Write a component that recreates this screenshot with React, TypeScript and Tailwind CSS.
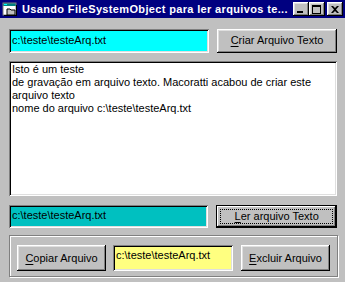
import React from "react";

const sunken =
  "shadow-[inset_1px_1px_#808080,inset_-1px_-1px_#ffffff,inset_2px_2px_#000000,inset_-2px_-2px_#dfdfdf]";
const raised =
  "shadow-[inset_-1px_-1px_#000000,inset_1px_1px_#ffffff,inset_-2px_-2px_#808080,inset_2px_2px_#dfdfdf]";

function Btn({ className = "", children }: { className?: string; children: React.ReactNode }) {
  return (
    <div
      className={`bg-[#c0c0c0] ${raised} flex items-center justify-center text-[11px] text-black leading-none ${className}`}
    >
      {children}
    </div>
  );
}

function CtrlBtn({ children }: { children: React.ReactNode }) {
  return (
    <div className={`w-[16px] h-[14px] bg-[#c0c0c0] ${raised} flex items-center justify-center`}>
      {children}
    </div>
  );
}

export default function App() {
  return (
    <div
      className="w-[345px] h-[282px] bg-[#c0c0c0] overflow-hidden flex flex-col"
      style={{ fontFamily: '"Liberation Sans", Arial, sans-serif' }}
    >
      {/* Title bar */}
      <div className="h-[18px] bg-[#000080] flex items-center pl-[2px] pr-[2px] shrink-0">
        <svg width="16" height="16" viewBox="0 0 16 16" className="shrink-0">
          <rect x="1" y="2" width="13" height="12" fill="#ffffff" />
          <rect x="1" y="2" width="13" height="3" fill="#008080" />
          <rect x="2" y="3" width="3" height="1" fill="#00ffff" />
          <rect x="1" y="2" width="13" height="12" fill="none" stroke="#808080" strokeWidth="1" />
          <path d="M5 8 h3 l1 1 h4 v5 h-8 z" fill="#c0c0c0" stroke="#000000" strokeWidth="1" />
          <rect x="14" y="4" width="1" height="10" fill="#000000" />
          <rect x="2" y="14" width="13" height="1" fill="#000000" />
        </svg>
        <div className="ml-[4px] text-white font-bold text-[11px] leading-none whitespace-nowrap tracking-[0.35px]">
          Usando FileSystemObject para ler arquivos te...
        </div>
        <div className="flex-1" />
        <div className="flex items-center">
          <CtrlBtn>
            <div className="w-[6px] h-[2px] bg-black mt-[6px] mr-[2px]" />
          </CtrlBtn>
          <CtrlBtn>
            <div className="w-[9px] h-[9px] border border-black border-t-2 mr-[1px]" />
          </CtrlBtn>
          <div className="w-[2px]" />
          <CtrlBtn>
            <svg width="8" height="7" viewBox="0 0 8 7" className="mr-[1px]">
              <path d="M0 0h2l2 2 2-2h2l-3 3.5 3 3.5h-2l-2-2-2 2h-2l3-3.5z" fill="#000" />
            </svg>
          </CtrlBtn>
        </div>
      </div>

      {/* Content */}
      <div className="flex flex-col pl-[9px] pr-[8px] pt-[11px]">
        <div className="flex h-[24px] gap-[8px]">
          <div className={`w-[200px] h-full bg-[#00ffff] ${sunken} flex items-center pl-[3px] text-[11px] text-black leading-none pb-[2px]`}>
            c:\teste\testeArq.txt
          </div>
          <Btn className="w-[120px] h-full pb-[1px]">
            <span>
              <span className="underline underline-offset-[2px]">C</span>riar Arquivo Texto
            </span>
          </Btn>
        </div>

        <div className={`mt-[8px] h-[135px] bg-white ${sunken} pl-[3px] pt-[2px] text-[11px] leading-[13px] text-black`}>
          <div>Isto é um teste</div>
          <div>de gravação em arquivo texto. Macoratti acabou de criar este</div>
          <div>arquivo texto</div>
          <div>nome do arquivo c:\teste\testeArq.txt</div>
        </div>

        <div className="flex h-[23px] gap-[8px] mt-[9px]">
          <div className={`w-[200px] h-full bg-[#00c0c0] ${sunken} flex items-center pl-[3px] text-[11px] text-black leading-none pb-[2px]`}>
            c:\teste\testeArq.txt
          </div>
          <div className="w-[121px] h-full border border-black bg-[#c0c0c0] shadow-[inset_-1px_-1px_#000000,inset_1px_1px_#ffffff,inset_-2px_-2px_#808080] p-[3px]">
            <div className="w-full h-full border border-dotted border-black flex items-center justify-center text-[11px] leading-none text-black">
              <span>
                <span className="underline underline-offset-[2px]">L</span>er arquivo Texto
              </span>
            </div>
          </div>
        </div>

        <div className="mt-[7px] h-[42px] w-[329px] border border-[#808080] shadow-[inset_1px_1px_#ffffff,1px_1px_#ffffff] flex items-start pl-[7px] pt-[9px]">
          <Btn className="w-[89px] h-[26px]">
            <span>
              <span className="underline underline-offset-[2px]">C</span>opiar Arquivo
            </span>
          </Btn>
          <div className={`ml-[7px] w-[120px] h-[26px] bg-[#ffff80] ${sunken} pl-[3px] pt-[5px] text-[11px] leading-none text-black`}>
            c:\teste\testeArq.txt
          </div>
          <Btn className="ml-[8px] w-[89px] h-[26px]">
            <span>
              <span className="underline underline-offset-[2px]">E</span>xcluir Arquivo
            </span>
          </Btn>
        </div>
      </div>
    </div>
  );
}
